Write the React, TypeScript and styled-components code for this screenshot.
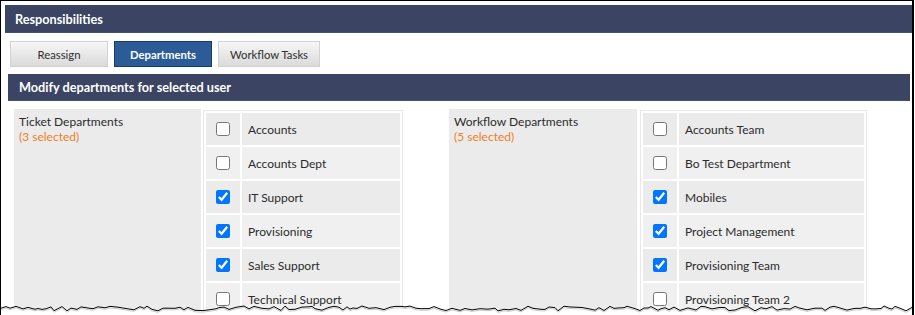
import React from 'react';
import styled, { createGlobalStyle } from 'styled-components';

const GlobalStyle = createGlobalStyle`
  body {
    margin: 0;
    background: #ffffff;
    font-family: Lato, "Liberation Sans", sans-serif;
  }
`;

const Frame = styled.div`
  position: relative;
  box-sizing: border-box;
  width: 914px;
  height: 315px;
  overflow: hidden;
  border-top: 1px solid #000000;
  border-left: 1px solid #000000;
  border-right: 2px solid #000000;
  padding: 4px 0 0 4px;
  background: #ffffff;
`;

const Bar = styled.div<{ $inset?: boolean }>`
  box-sizing: border-box;
  height: ${(p) => (p.$inset ? '27px' : '28px')};
  margin: ${(p) => (p.$inset ? '0 2px 0 3px' : '0')};
  padding-left: ${(p) => (p.$inset ? '11px' : '10px')};
  display: flex;
  align-items: center;
  background: #3b4563;
  border-bottom: 1px solid #3e5669;
  color: #ffffff;
  font-size: 12.7px;
  font-weight: 700;
`;

const Tabs = styled.div`
  display: flex;
  gap: 6px;
  margin: 8px 0 7px 5px;
`;

const Tab = styled.div<{ $active?: boolean }>`
  box-sizing: border-box;
  min-width: 98px;
  height: 26px;
  padding: 0 11px;
  display: flex;
  align-items: center;
  justify-content: center;
  font-size: 11.3px;
  font-weight: ${(p) => (p.$active ? 700 : 400)};
  color: ${(p) => (p.$active ? '#ffffff' : '#2e2e2e')};
  background: ${(p) =>
    p.$active ? '#2b5c98' : 'linear-gradient(#f7f7f7, #dadada)'};
  border: 1px solid ${(p) => (p.$active ? '#1a3d68' : '#d2d2d2')};
`;

const Content = styled.div`
  display: flex;
  margin: 8px 0 0 9px;
`;

const Group = styled.div<{ $gap: number }>`
  display: flex;
  align-items: stretch;
  gap: ${(p) => p.$gap}px;
  margin-right: 46px;
`;

const LabelPanel = styled.div<{ $width: number }>`
  width: ${(p) => p.$width}px;
  background: #ebebeb;
  padding: 5px 0 0 5px;
  box-sizing: border-box;
  font-size: 12px;
  line-height: 15px;
  color: #2b2b2b;
`;

const Count = styled.div`
  color: #f07f1e;
`;

const ListTable = styled.div<{ $labelWidth: number }>`
  margin-top: 1px;
  display: grid;
  grid-template-columns: 34px ${(p) => p.$labelWidth}px;
  grid-auto-rows: 32px;
  gap: 2px;
  padding: 2px;
  border: 1px solid #e8e8e8;
  align-self: flex-start;
`;

const Cell = styled.div<{ $odd: boolean }>`
  display: flex;
  align-items: center;
  background: ${(p) => (p.$odd ? '#ebebeb' : '#f0f0f0')};
  font-size: 12px;
  color: #2b2b2b;
`;

const CheckCell = styled(Cell)`
  justify-content: center;
`;

const NameCell = styled(Cell)`
  padding-left: 6px;
`;

const Box = styled.input`
  margin: 0;
  width: 14px;
  height: 14px;
`;

const TornSvg = styled.svg`
  position: absolute;
  left: -1px;
  bottom: 0;
`;

type Item = { name: string; on: boolean };

const ticket: Item[] = [
  { name: 'Accounts', on: false },
  { name: 'Accounts Dept', on: false },
  { name: 'IT Support', on: true },
  { name: 'Provisioning', on: true },
  { name: 'Sales Support', on: true },
  { name: 'Technical Support', on: false },
];

const workflow: Item[] = [
  { name: 'Accounts Team', on: false },
  { name: 'Bo Test Department', on: false },
  { name: 'Mobiles', on: true },
  { name: 'Project Management', on: true },
  { name: 'Provisioning Team', on: true },
  { name: 'Provisioning Team 2', on: false },
];

const DeptList: React.FC<{ items: Item[]; labelWidth: number }> = ({ items, labelWidth }) => (
  <ListTable $labelWidth={labelWidth}>
    {items.map((it, i) => (
      <React.Fragment key={it.name}>
        <CheckCell $odd={i % 2 === 0}>
          <Box type="checkbox" defaultChecked={it.on} />
        </CheckCell>
        <NameCell $odd={i % 2 === 0}>{it.name}</NameCell>
      </React.Fragment>
    ))}
  </ListTable>
);

const tornPoints = (() => {
  let seed = 7;
  const rnd = () => {
    seed = (seed * 9301 + 49297) % 233280;
    return seed / 233280;
  };
  const pts: string[] = [];
  let x = 0;
  while (x <= 916) {
    pts.push(`${x},${(7 + rnd() * 5).toFixed(1)}`);
    x += 3 + Math.round(rnd() * 5);
  }
  pts.push('916,9');
  return pts;
})();

const TornEdge: React.FC = () => (
  <TornSvg width="916" height="16" viewBox="0 0 916 16">
    <polygon points={`${tornPoints.join(' ')} 916,16 0,16`} fill="#ffffff" />
    <polyline
      points={tornPoints.map((p) => {
        const [x, y] = p.split(',');
        return `${x},${Number(y) + 1.5}`;
      }).join(' ')}
      fill="none"
      stroke="#c8c8c8"
      strokeWidth="1"
    />
    <polyline points={tornPoints.join(' ')} fill="none" stroke="#000000" strokeWidth="1" />
  </TornSvg>
);

const App: React.FC = () => (
  <>
    <GlobalStyle />
    <Frame>
      <Bar>Responsibilities</Bar>
      <Tabs>
        <Tab>Reassign</Tab>
        <Tab $active>Departments</Tab>
        <Tab>Workflow Tasks</Tab>
      </Tabs>
      <Bar $inset>Modify departments for selected user</Bar>
      <Content>
        <Group $gap={2}>
          <LabelPanel $width={187}>
            Ticket Departments
            <Count>(3 selected)</Count>
          </LabelPanel>
          <DeptList items={ticket} labelWidth={158} />
        </Group>
        <Group $gap={3}>
          <LabelPanel $width={188}>
            Workflow Departments
            <Count>(5 selected)</Count>
          </LabelPanel>
          <DeptList items={workflow} labelWidth={185} />
        </Group>
      </Content>
      <TornEdge />
    </Frame>
  </>
);

export default App;
